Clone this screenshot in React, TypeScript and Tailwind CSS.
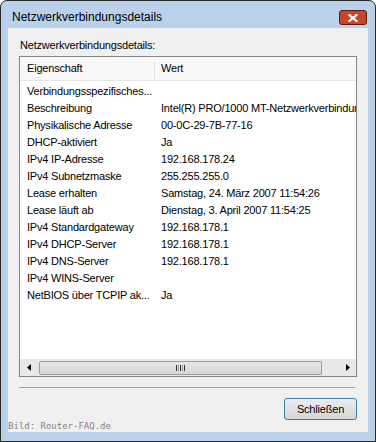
import React from "react";

const rows: [string, string][] = [
  ["Verbindungsspezifisches...", ""],
  ["Beschreibung", "Intel(R) PRO/1000 MT-Netzwerkverbindung"],
  ["Physikalische Adresse", "00-0C-29-7B-77-16"],
  ["DHCP-aktiviert", "Ja"],
  ["IPv4 IP-Adresse", "192.168.178.24"],
  ["IPv4 Subnetzmaske", "255.255.255.0"],
  ["Lease erhalten", "Samstag, 24. März 2007 11:54:26"],
  ["Lease läuft ab", "Dienstag, 3. April 2007 11:54:25"],
  ["IPv4 Standardgateway", "192.168.178.1"],
  ["IPv4 DHCP-Server", "192.168.178.1"],
  ["IPv4 DNS-Server", "192.168.178.1"],
  ["IPv4 WINS-Server", ""],
  ["NetBIOS über TCPIP ak...", "Ja"],
];

export default function App() {
  return (
    <div className="relative w-[376px] h-[442px] font-['Liberation_Sans',Arial,sans-serif] text-black">
      <div className="flex flex-col w-full h-full border border-[#2a2a2a] rounded-t-[7px] bg-[#b9d1ea] overflow-hidden">
        {/* Title bar */}
        <div className="h-[27px] flex items-start justify-between pl-[11px] pr-[8px] shrink-0">
          <span className="text-[12px] leading-[15px] pt-[9px] text-black">Netzwerkverbindungsdetails</span>
          <div className="mt-[9px] w-[28px] h-[15px] rounded-[3px] border border-[#5a1f12] bg-[#c7452b] flex items-center justify-center">
            <svg width="10" height="8" viewBox="0 0 10 8">
              <path d="M1.5 1 L8.5 7 M8.5 1 L1.5 7" stroke="white" strokeWidth="2.2" strokeLinecap="square" />
            </svg>
          </div>
        </div>
        {/* Client area */}
        <div className="flex-1 mx-[7px] mb-[9px] bg-[#f0f0f0] flex flex-col">
          <div className="pt-[11px] pl-[12px] text-[11px] leading-[13px] tracking-[-0.2px]">Netzwerkverbindungsdetails:</div>
          <div className="mt-[4px] mx-[11px] h-[321px] border border-[#828790] bg-white flex flex-col text-[11px] tracking-[-0.2px] overflow-hidden">
            {/* header */}
            <div className="h-[24px] shrink-0 bg-[#f8f8f8] border-b border-[#e5e5e5] flex items-center">
              <div className="w-[134px] pl-[7px]">Eigenschaft</div>
              <div className="w-px h-[17px] self-end mb-[1px] bg-[#e0e0e0]" />
              <div className="pl-[6px]">Wert</div>
            </div>
            {/* rows */}
            <div className="flex-1 pt-[2px] flex flex-col">
              {rows.map(([k, v], i) => (
                <div key={i} className="h-[17px] flex items-center whitespace-nowrap">
                  <div className="w-[135px] shrink-0 pl-[7px]">{k}</div>
                  <div className="pl-[6px]">{v}</div>
                </div>
              ))}
            </div>
            {/* horizontal scrollbar */}
            <div className="h-[17px] shrink-0 bg-[#e8e8e8] flex items-center">
              <div className="w-[17px] h-full flex items-center justify-center">
                <svg width="4" height="7" viewBox="0 0 4 7">
                  <path d="M4 0 L0 3.5 L4 7 Z" fill="black" />
                </svg>
              </div>
              <div className="ml-[2px] w-[283px] h-[14px] rounded-[2px] border border-[#9c9c9c] bg-gradient-to-b from-[#e6e6e6] to-[#d6d6d6] flex items-center justify-center gap-[1px]">
                <div className="w-[1px] h-[6px] bg-[#333]" />
                <div className="w-[1px] h-[6px] bg-[#999]" />
                <div className="w-[1px] h-[6px] bg-[#333]" />
                <div className="w-[1px] h-[6px] bg-[#999]" />
                <div className="w-[1px] h-[6px] bg-[#333]" />
              </div>
              <div className="ml-auto w-[17px] h-full flex items-center justify-center">
                <svg width="4" height="7" viewBox="0 0 4 7">
                  <path d="M0 0 L4 3.5 L0 7 Z" fill="black" />
                </svg>
              </div>
            </div>
          </div>
          <div className="mt-[10px] ml-[11px] mr-[13px] h-px bg-[#a0a0a0]" />
          <div className="mt-[10px] self-end mr-[11px] w-[73px] h-[22px] rounded-[3px] border border-[#3c7fb1] bg-gradient-to-b from-[#ececec] to-[#d6d6d6] flex items-center justify-center text-[11px] tracking-[-0.2px]">
            Schließen
          </div>
        </div>
      </div>
      <div className="absolute left-[8px] top-[421px] text-[9px] leading-[11px] text-[#858585] font-['DejaVu_Sans_Mono',monospace]">
        Bild: Router-FAQ.de
      </div>
    </div>
  );
}
